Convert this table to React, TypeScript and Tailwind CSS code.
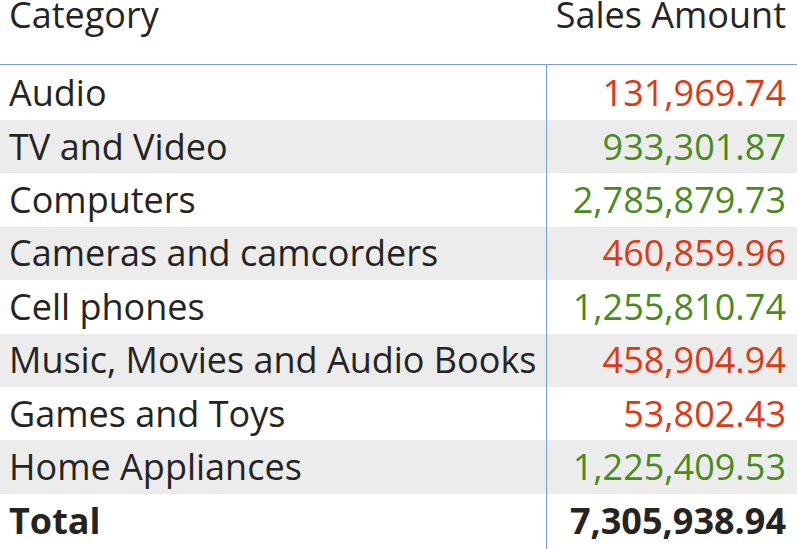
import React from "react";

type Row = {
  name: string;
  amount: string;
  up: boolean;
};

const rows: Row[] = [
  { name: "Audio", amount: "131,969.74", up: false },
  { name: "TV and Video", amount: "933,301.87", up: true },
  { name: "Computers", amount: "2,785,879.73", up: true },
  { name: "Cameras and camcorders", amount: "460,859.96", up: false },
  { name: "Cell phones", amount: "1,255,810.74", up: true },
  { name: "Music, Movies and Audio Books", amount: "458,904.94", up: false },
  { name: "Games and Toys", amount: "53,802.43", up: false },
  { name: "Home Appliances", amount: "1,225,409.53", up: true },
];

const App = () => {
  return (
    <div className="w-[797px] h-[549px] overflow-hidden bg-white text-[#252423] font-['Open_Sans',sans-serif] text-[36px] leading-none">
      {/* HEADER */}
      <div className="grid grid-cols-[546px_1fr] h-[65px] border-b border-[#7a9be6]">
        <div className="pl-[9px] leading-[30px]">Category</div>
        <div className="pr-[11px] leading-[30px] text-right whitespace-nowrap">Sales Amount</div>
      </div>

      {/* ROWS */}
      {rows.map((r, i) => (
        <div
          key={r.name}
          className={`grid grid-cols-[546px_1fr] ${i === 0 ? "h-[55px]" : "h-[53.4px]"} ${
            i % 2 === 1 ? "bg-[#ececec]" : "bg-white"
          }`}
        >
          <div className="pl-[9px] flex items-center whitespace-nowrap">{r.name}</div>
          <div
            className={`pr-[11px] flex items-center justify-end border-l border-[#7a9be6] ${
              r.up ? "text-[#4a8a1f]" : "text-[#db3a17]"
            }`}
          >
            {r.amount}
          </div>
        </div>
      ))}

      {/* TOTAL */}
      <div className="grid grid-cols-[546px_1fr] h-[55px] font-bold">
        <div className="pl-[9px] flex items-center">Total</div>
        <div className="pr-[11px] flex items-center justify-end border-l border-[#7a9be6]">
          7,305,938.94
        </div>
      </div>
    </div>
  );
};

export default App;
